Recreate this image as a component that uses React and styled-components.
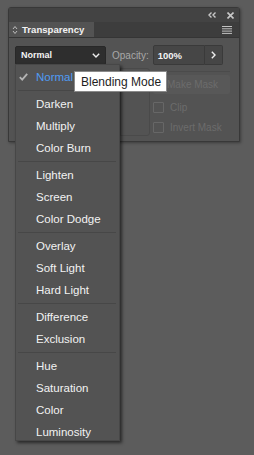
import styled, { createGlobalStyle } from 'styled-components';

const Global = createGlobalStyle`
  html, body {
    margin: 0;
    background: #5c5c5c;
  }
  body {
    font-family: "Liberation Sans", Arial, sans-serif;
    width: 254px;
    height: 455px;
    overflow: hidden;
  }
`;

const Page = styled.div`
  position: relative;
  width: 254px;
  height: 455px;
  padding: 7px 0 0 8px;
  box-sizing: border-box;
`;

const Panel = styled.div`
  width: 232px;
  height: 135px;
  background: #535353;
  border: 1px solid #383838;
  border-radius: 3px 3px 0 0;
  box-sizing: border-box;
  box-shadow: 1px 1px 3px rgba(0, 0, 0, 0.35);
  display: flex;
  flex-direction: column;
`;

const TitleBar = styled.div`
  height: 14px;
  background: #434343;
  display: flex;
  align-items: center;
  justify-content: flex-end;
  gap: 11px;
  padding-right: 5px;
`;

const TabRow = styled.div`
  height: 15px;
  background: #3d3d3d;
  border-bottom: 1px solid #353535;
  display: flex;
  align-items: stretch;
  justify-content: space-between;
`;

const Tab = styled.div`
  width: 82px;
  background: #535353;
  display: flex;
  align-items: center;
  gap: 4px;
  padding-left: 3px;
  color: #f2f2f2;
  font-size: 9.6px;
  font-weight: bold;
`;

const MenuIcon = styled.div`
  display: flex;
  align-items: center;
  padding-right: 7px;
`;

const Body = styled.div`
  flex: 1;
  padding: 7px 9px 0 6px;
  display: flex;
  flex-direction: column;
  gap: 3px;
`;

const TopRow = styled.div`
  display: flex;
  align-items: center;
  height: 20px;
`;

const Select = styled.div`
  width: 91px;
  height: 19px;
  background: #2e2e2e;
  border: 1px solid #282828;
  border-radius: 2px;
  box-sizing: border-box;
  display: flex;
  align-items: center;
  justify-content: space-between;
  padding: 0 5px 0 5px;
  color: #f4f4f4;
  font-size: 9px;
  font-weight: bold;
`;

const Label = styled.span`
  margin: 0 4px 0 6px;
  color: #a8a8a8;
  font-size: 10px;
`;

const Input = styled.div`
  width: 52px;
  height: 20px;
  background: #464646;
  border: 1px solid #3a3a3a;
  border-radius: 2px 0 0 2px;
  box-sizing: border-box;
  display: flex;
  align-items: center;
  padding-left: 4px;
  color: #f4f4f4;
  font-size: 9.5px;
  font-weight: bold;
`;

const StepButton = styled.div`
  width: 18px;
  height: 20px;
  background: #464646;
  border: 1px solid #3a3a3a;
  border-left: none;
  border-radius: 0 2px 2px 0;
  box-sizing: border-box;
  display: flex;
  align-items: center;
  justify-content: center;
`;

const LowerRow = styled.div`
  display: flex;
  gap: 3px;
`;

const Thumbs = styled.div`
  width: 135px;
  height: 68px;
  border: 1px solid #4a4a4a;
  border-radius: 3px;
  box-sizing: border-box;
  display: flex;
  justify-content: flex-end;
`;

const ThumbSlot = styled.div`
  width: 28px;
  border-left: 1px solid #484848;
`;

const Side = styled.div`
  flex: 1;
  display: flex;
  flex-direction: column;
  padding-top: 6px;
  border-top: 1px solid #4b4b4b;
  margin-top: 3px;
  margin-left: -33px;
`;

const SideInner = styled.div`
  padding-left: 33px;
  display: flex;
  flex-direction: column;
`;

const MaskButton = styled.div`
  height: 19px;
  margin-top: -3px;
  background: #585858;
  border-radius: 2px;
  display: flex;
  align-items: center;
  padding-left: 14px;
  color: #6c6c6c;
  font-size: 10px;
`;

const Check = styled.div`
  display: flex;
  align-items: center;
  gap: 6px;
  height: 11px;
  margin-top: ${p => p.$gap}px;
  color: #6c6c6c;
  font-size: 10px;
  &::before {
    content: '';
    width: 9px;
    height: 9px;
    border: 1px solid #676767;
    border-radius: 1px;
  }
`;

const Menu = styled.div`
  position: absolute;
  left: 15px;
  top: 64px;
  width: 105px;
  height: 377px;
  overflow: hidden;
  background: #535353;
  border: 1px solid #474747;
  box-sizing: border-box;
  box-shadow: 2px 2px 3px rgba(0, 0, 0, 0.55);
  padding-top: 1px;
`;

const Item = styled.div`
  position: relative;
  height: 22px;
  line-height: 22px;
  padding-left: 20px;
  font-size: 11.5px;
  color: ${p => (p.$active ? '#4f9bf3' : '#f2f2f2')};
`;

const Tick = styled.span`
  position: absolute;
  left: 3px;
  top: 7px;
  display: flex;
`;

const Sep = styled.div`
  height: 5px;
  box-sizing: border-box;
  display: flex;
  align-items: center;
  padding: 0 3px 1px 2px;
  &::after {
    content: '';
    flex: 1;
    height: 1px;
    background: #474747;
  }
`;

const Tooltip = styled.div`
  position: absolute;
  left: 74px;
  top: 71px;
  width: 93px;
  height: 21px;
  background: #ffffff;
  border: 1px solid #8a8a8a;
  box-sizing: border-box;
  display: flex;
  align-items: center;
  padding-left: 6px;
  color: #1e1e1e;
  font-size: 12px;
  white-space: nowrap;
`;

const groups = [
  ['Normal'],
  ['Darken', 'Multiply', 'Color Burn'],
  ['Lighten', 'Screen', 'Color Dodge'],
  ['Overlay', 'Soft Light', 'Hard Light'],
  ['Difference', 'Exclusion'],
  ['Hue', 'Saturation', 'Color', 'Luminosity'],
];

export default function App() {
  return (
    <Page>
      <Global />
      <Panel>
        <TitleBar>
          <svg width="8" height="6" viewBox="0 0 8 6">
            <path d="M3.5 0.5 L1 3 L3.5 5.5 M7.5 0.5 L5 3 L7.5 5.5" stroke="#c8c8c8" strokeWidth="1.4" fill="none" />
          </svg>
          <svg width="7" height="7" viewBox="0 0 7 7">
            <path d="M0.5 0.5 L6.5 6.5 M6.5 0.5 L0.5 6.5" stroke="#c8c8c8" strokeWidth="1.6" />
          </svg>
        </TitleBar>
        <TabRow>
          <Tab>
            <svg width="6" height="10" viewBox="0 0 6 10">
              <path d="M1 4 L3 1.5 L5 4 M1 6 L3 8.5 L5 6" stroke="#bdbdbd" strokeWidth="1" fill="none" />
            </svg>
            Transparency
          </Tab>
          <MenuIcon>
            <svg width="10" height="8" viewBox="0 0 10 8">
              <path d="M0 0.5 H10 M0 2.8 H10 M0 5.1 H10 M0 7.4 H10" stroke="#c2c2c2" strokeWidth="1" />
            </svg>
          </MenuIcon>
        </TabRow>
        <Body>
          <TopRow>
            <Select>
              Normal
              <svg width="8" height="5" viewBox="0 0 8 5">
                <path d="M0.8 0.8 L4 4 L7.2 0.8" stroke="#eeeeee" strokeWidth="1.4" fill="none" />
              </svg>
            </Select>
            <Label>Opacity:</Label>
            <Input>100%</Input>
            <StepButton>
              <svg width="5" height="8" viewBox="0 0 5 8">
                <path d="M0.8 0.8 L4 4 L0.8 7.2" stroke="#eeeeee" strokeWidth="1.4" fill="none" />
              </svg>
            </StepButton>
          </TopRow>
          <LowerRow>
            <Thumbs>
              <ThumbSlot />
            </Thumbs>
            <Side>
              <SideInner>
                <MaskButton>Make Mask</MaskButton>
                <Check $gap={8}>Clip</Check>
                <Check $gap={9}>Invert Mask</Check>
              </SideInner>
            </Side>
          </LowerRow>
        </Body>
      </Panel>

      <Menu>
        {groups.map((g, gi) => (
          <div key={gi}>
            {gi > 0 && <Sep />}
            {g.map(name => (
              <Item key={name} $active={name === 'Normal'}>
                {name === 'Normal' && (
                  <Tick>
                    <svg width="9" height="8" viewBox="0 0 9 8">
                      <path d="M0.8 4.2 L3.2 6.6 L8.2 0.8" stroke="#b4b4b4" strokeWidth="1.8" fill="none" />
                    </svg>
                  </Tick>
                )}
                {name}
              </Item>
            ))}
          </div>
        ))}
      </Menu>

      <Tooltip>Blending Mode</Tooltip>
    </Page>
  );
}
